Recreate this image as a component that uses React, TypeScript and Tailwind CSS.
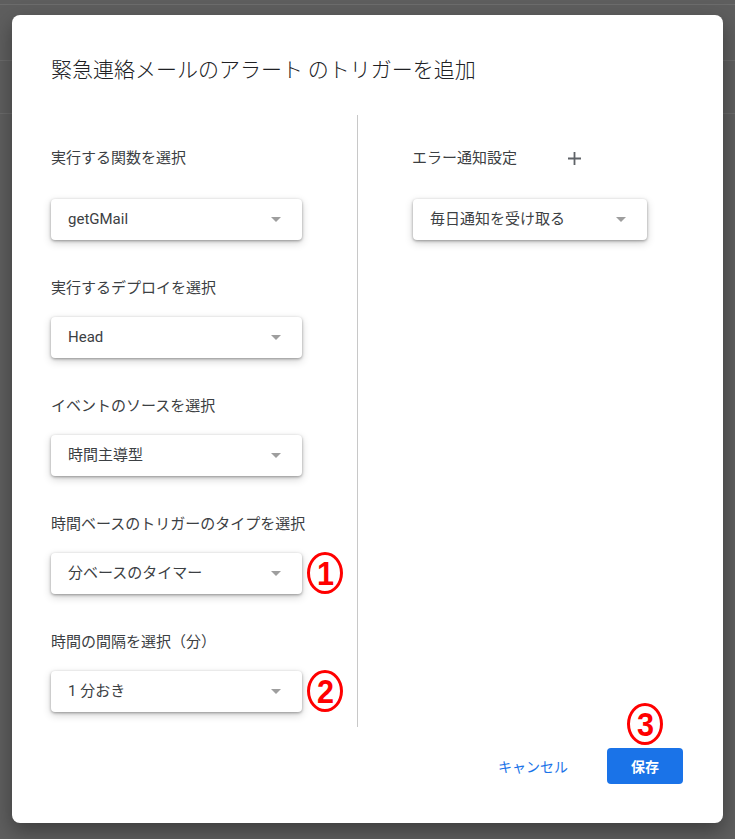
import React from "react";

const jp = { fontFamily: '"Noto Sans CJK JP", "Noto Sans", sans-serif' };
const mixed = { fontFamily: 'Roboto, "Noto Sans CJK JP", sans-serif' };

function Dropdown({ value, w = "w-[251px]" }: { value: string; w?: string }) {
  return (
    <div
      className={`${w} h-[41px] bg-white rounded-[4px] flex items-center justify-between pl-[17px] pr-[21px] shadow-[0_1px_3px_rgba(0,0,0,0.35),0_3px_8px_rgba(0,0,0,0.18)]`}
    >
      <span className="text-[15px] text-[#3c4043] leading-none" style={mixed}>
        {value}
      </span>
      <svg width="10" height="5" viewBox="0 0 10 5">
        <path d="M0 0 L10 0 L5 5 Z" fill="#9e9e9e" />
      </svg>
    </div>
  );
}

function Label({ children }: { children: React.ReactNode }) {
  return (
    <div className="h-[20px] leading-[20px] text-[15px] text-[#3c4043]" style={jp}>
      {children}
    </div>
  );
}

function Mark({ ch, className }: { ch: string; className: string }) {
  return (
    <div
      className={`absolute w-[36px] h-[42px] rounded-[50%] border-[3px] border-[#ff0000] flex items-center justify-center ${className}`}
    >
      <span
        className="text-[34px] leading-none font-bold text-[#ff0000] scale-x-[0.9]"
        style={{ fontFamily: '"Liberation Sans", Arial, sans-serif' }}
      >
        {ch}
      </span>
    </div>
  );
}

export default function App() {
  const groups = [
    { label: "実行するデプロイを選択", value: "Head" },
    { label: "イベントのソースを選択", value: "時間主導型" },
    { label: "時間ベースのトリガーのタイプを選択", value: "分ベースのタイマー" },
    { label: "時間の間隔を選択（分）", value: "1 分おき" },
  ];
  return (
    <div className="relative w-[735px] h-[839px] bg-[#5e5e5e] overflow-hidden">
      <div className="h-[4px]" />
      <div className="h-[1px] bg-[#6c6c6c]" />
      <div className="h-[55px]" />
      <div className="h-[1px] bg-[#6a6a6a]" />
      <div className="h-[52px]" />
      <div className="h-[1px] bg-[#6a6a6a]" />

      <div className="absolute left-[12px] top-[15px] w-[711px] h-[808px] bg-white rounded-[8px] shadow-[0_8px_20px_rgba(0,0,0,0.35)] pt-[39px] pl-[39px] pr-[40px] flex flex-col">
        <div className="h-[28px] leading-[28px] text-[21px] text-[#202124] font-light" style={jp}>
          緊急連絡メールのアラート のトリガーを追加
        </div>
        <div className="mt-[33px] flex h-[612px]">
          <div className="w-[307px] border-r border-[#c8c8c8] pt-[32px]">
            <Label>実行する関数を選択</Label>
            <div className="mt-[32px]">
              <Dropdown value="getGMail" />
            </div>
            {groups.map((g) => (
              <div key={g.label} className="mt-[37px]">
                <Label>{g.label}</Label>
                <div className="mt-[20px]">
                  <Dropdown value={g.value} />
                </div>
              </div>
            ))}
          </div>
          <div className="pl-[54px] pt-[32px]">
            <div className="flex items-center h-[20px]">
              <Label>エラー通知設定</Label>
              <svg className="ml-[51px] mt-[2px]" width="13" height="13" viewBox="0 0 13 13">
                <path d="M6.5 0 V13 M0 6.5 H13" stroke="#5f6368" strokeWidth="1.8" />
              </svg>
            </div>
            <div className="mt-[32px] ml-[1px]">
              <Dropdown value="毎日通知を受け取る" w="w-[234px]" />
            </div>
          </div>
        </div>
        <div className="mt-[21px] flex justify-end items-center">
          <button className="text-[14px] text-[#1a73e8] h-[36px] px-0" style={jp}>
            キャンセル
          </button>
          <button
            className="ml-[39px] w-[76px] h-[36px] rounded-[4px] bg-[#1a73e8] text-white text-[14px] font-bold"
            style={jp}
          >
            保存
          </button>
        </div>

        <Mark ch="1" className="left-[295px] top-[537px]" />
        <Mark ch="2" className="left-[295px] top-[655px]" />
        <Mark ch="3" className="left-[615px] top-[688px]" />
      </div>
    </div>
  );
}
